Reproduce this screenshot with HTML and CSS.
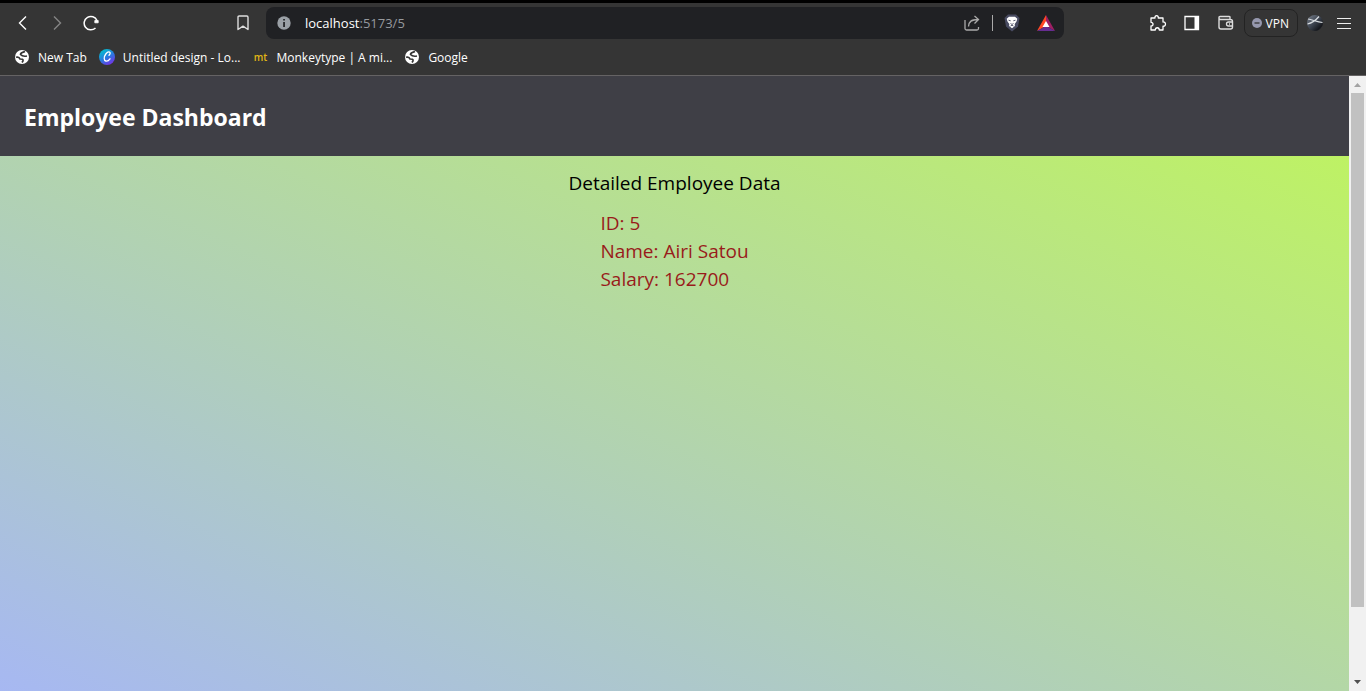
FILE: index.html
```html
<!DOCTYPE html>
<html lang="en">
<head>
<meta charset="utf-8">
<title>Employee Dashboard</title>
<link rel="stylesheet" href="styles.css">
</head>
<body>
<div class="browser">
  <div class="toolbar">
    <div class="nav-buttons">
      <button class="icon-button" aria-label="Back"><svg width="16" height="16" viewBox="0 0 16 16"><path d="M11 1.500 4.500 8l6.500 6.500" fill="none" stroke="#fff" stroke-width="1.400"/></svg></button>
      <button class="icon-button" aria-label="Forward"><svg width="16" height="16" viewBox="0 0 16 16"><path d="M5 1.500 11.500 8 5 14.500" fill="none" stroke="#858585" stroke-width="1.400"/></svg></button>
      <button class="icon-button" aria-label="Reload"><svg width="16" height="16" viewBox="0 0 16 16"><path d="M12.500 13A6.700 6.700 0 1 1 14 5.500" fill="none" stroke="#fff" stroke-width="1.500"/><path d="M11.800 5.500h3.400v2.300h-3.400z" fill="#fff" stroke="#fff" stroke-width=".8" stroke-linejoin="round"/></svg></button>
    </div>
    <button class="icon-button bookmark" aria-label="Bookmark this page"><svg width="16" height="16" viewBox="0 0 16 16"><path d="M3 2.200Q3 1 4.200 1h7.600Q13 1 13 2.200v12.300l-5-3.300-5 3.300z" fill="none" stroke="#ddd" stroke-width="1.400" stroke-linejoin="round"/></svg></button>
    <div class="address-bar">
      <svg width="14" height="14" viewBox="0 0 14 14"><circle cx="7" cy="7" r="6.700" fill="#9aa0a6"/><path d="M6.200 3h1.700v1.600H6.200zM6.200 6h1.700v5H6.200z" fill="#202124"/></svg>
      <div class="url"><span class="host">localhost</span>:5173/5</div>
      <div class="address-actions">
        <button class="icon-button share" aria-label="Share"><svg width="16" height="16" viewBox="0 0 16 16"><path d="M1 5v8.500Q1 15 2.500 15H13q1.500 0 1.500-1.500V12M4.500 11.500C4.500 6.800 7 4.500 14 4.500M10.500 1l4 3.500-4 4" fill="none" stroke="#aaa" stroke-width="1.300"/></svg></button>
        <span class="divider"></span>
        <button class="icon-button shields" aria-label="Shields"><svg width="16" height="18" viewBox="0 0 16 18"><path d="M4 .5h8L15.500 4 14 12.500 8 17.500l-6-5L.5 4z" fill="#484b61"/><path d="M5 2.700h6l2.300 2-.8 2.800-1.800 2.500.2 2L8 14.300 5.100 12l.2-2-1.800-2.500-.8-2.800z" fill="#fff"/><path d="m4.500 6.200 2.200.6M11.500 6.200l-2.200.6M6.500 9.500 8 10.500l1.500-1M6.500 12 8 11.300l1.500.7" fill="none" stroke="#484b61" stroke-width=".9"/></svg></button>
        <button class="icon-button rewards" aria-label="Rewards"><svg width="18" height="16" viewBox="0 0 18 16"><path d="M9 0 0 16l9-5z" fill="#ff4724"/><path d="m9 0 9 16-9-5z" fill="#9e1f63"/><path d="M0 16h18l-9-5z" fill="#662d91"/><path d="m9 6-3.500 6h7z" fill="#fff"/></svg></button>
      </div>
    </div>
    <div class="tools">
      <button class="icon-button" aria-label="Extensions"><svg width="18" height="18" viewBox="0 0 18 18"><path d="M2 4h4C5.500 1 9.700.8 9.300 4H14v4c3.300-.5 3.300 4.700 0 4.200V16h-3.700c0-3-4-3-4 0H2v-4c2.700 0 2.700-3.700 0-3.700z" fill="none" stroke="#fff" stroke-width="1.300" stroke-linejoin="round"/></svg></button>
      <button class="icon-button" aria-label="Sidebar"><svg width="16" height="16" viewBox="0 0 16 16"><path d="M1 1.500h13.500v13H1z" fill="none" stroke="#fff" stroke-width="1.300"/><path d="M10.500 1H15v14h-4.500z" fill="#fff"/></svg></button>
      <button class="icon-button" aria-label="Wallet"><svg width="18" height="16" viewBox="0 0 18 16"><path d="M13 4.500V2.200Q13 1.500 12 1.500H3Q2 1.500 2 2.500V12q0 2 2 2h9.500q2 0 2-2V6.500q0-2-2-2H3.500Q2 4.500 2 3" fill="none" stroke="#ddd" stroke-width="1.400"/><path d="M15.500 7h-4q-2 0-2 2t2 2h4M12 9h1" fill="none" stroke="#ddd" stroke-width="1.300"/></svg></button>
      <button class="vpn"><svg width="10" height="10" viewBox="0 0 10 10"><circle cx="5" cy="5" r="5" fill="#9698ae"/><path d="M2.500 5h5" stroke="#333" stroke-width="1.300"/></svg>VPN</button>
      <button class="icon-button profile" aria-label="Profile"><svg width="16" height="16" viewBox="0 0 16 16"><defs><linearGradient id="orb" x2="1" y2="1"><stop stop-color="#7a828e"/><stop offset=".5" stop-color="#3a414d"/><stop offset=".8" stop-color="#15171c"/><stop offset="1" stop-color="#5c6068"/></linearGradient></defs><circle cx="8" cy="8" r="8" fill="url(#orb)"/><path d="M.5 9C5 8 9 5 12 1.500M1 4c4 .5 9 3 14.500 3.500" fill="none" stroke="#d8dce0" stroke-width="1.200"/></svg></button>
      <button class="icon-button" aria-label="Menu"><svg width="14" height="12" viewBox="0 0 14 12"><path d="M0 1.500h14M0 6.500h14M0 11.500h14" stroke="#eee" stroke-width="1.200"/></svg></button>
    </div>
  </div>
  <nav class="bookmarks" aria-label="Bookmarks">
    <a class="bookmark-link" href="#"><svg width="16" height="16" viewBox="0 0 16 16"><circle cx="8" cy="8" r="7" fill="#fff"/><path d="M2 8.300c2.500-.8 3.500.2 4 1.700 2 0 3.500 0 3 2L8 13.500M11 2.500C9 3 6.500 3.500 6.500 5.500c1.500 1.700 3 2.200 6.500 1.500" fill="none" stroke="#353535" stroke-width="1.700"/></svg>New Tab</a>
    <a class="bookmark-link" href="#"><svg width="16" height="16" viewBox="0 0 16 16"><defs><linearGradient id="canva" x1=".2" y1="0" x2=".8" y2="1"><stop stop-color="#00c4cc"/><stop offset=".5" stop-color="#287bdf"/><stop offset="1" stop-color="#7d2ae8"/></linearGradient></defs><circle cx="8" cy="8" r="8" fill="url(#canva)"/><path d="M10 6.300C13 3 9.500 1.500 6.800 5c-2.200 3-2 6.500 0 7 1.500.4 3.200-.8 4.200-2.200" fill="none" stroke="#fff" stroke-width="1.300" stroke-linecap="round"/></svg>Untitled design - Lo...</a>
    <a class="bookmark-link" href="#"><span class="mt-icon">mt</span>Monkeytype | A mi...</a>
    <a class="bookmark-link" href="#"><svg width="16" height="16" viewBox="0 0 16 16"><circle cx="8" cy="8" r="7" fill="#fff"/><path d="M2 8.300c2.500-.8 3.500.2 4 1.700 2 0 3.500 0 3 2L8 13.500M11 2.500C9 3 6.500 3.500 6.500 5.500c1.500 1.700 3 2.200 6.500 1.500" fill="none" stroke="#353535" stroke-width="1.700"/></svg>Google</a>
  </nav>
  <div class="viewport">
    <div class="page">
      <header class="page-header"><h1>Employee Dashboard</h1></header>
      <main class="content">
        <h2>Detailed Employee Data</h2>
        <div class="details">
          <p>ID: 5</p>
          <p>Name: Airi Satou</p>
          <p>Salary: 162700</p>
        </div>
      </main>
    </div>
    <div class="scrollbar">
      <svg width="7" height="4" viewBox="0 0 7 4"><path d="M3.500 0 7 4H0z" fill="#a3a3a3"/></svg>
      <div class="track"><div class="thumb"></div></div>
      <svg width="7" height="4" viewBox="0 0 7 4"><path d="M0 0h7L3.500 4z" fill="#505050"/></svg>
    </div>
  </div>
</div>
</body>
</html>
```

FILE: styles.css
```css
* { box-sizing: border-box; }

body, h1, h2, p { margin: 0; }

body { font-family: "Segoe UI", "Open Sans", "Noto Sans", sans-serif; }

button {
  border: 0;
  padding: 0;
  background: none;
  color: inherit;
  font: inherit;
}

svg { display: block; flex-shrink: 0; }

.browser {
  display: flex;
  flex-direction: column;
  height: 100vh;
  overflow: hidden;
  border-top: 3px solid #000;
  background: #353535;
  color: #fff;
  font-size: 12px;
}

.toolbar {
  display: flex;
  align-items: center;
  height: 40px;
  padding: 0 13px 0 14px;
  flex-shrink: 0;
}

.icon-button {
  display: flex;
  align-items: center;
  justify-content: center;
  min-width: 18px;
  height: 18px;
}

.nav-buttons { display: flex; gap: 16px; }

.bookmark { margin: 0 14px 0 134px; }

.address-bar {
  display: flex;
  align-items: center;
  flex: 1;
  height: 32px;
  padding: 0 9px 0 11px;
  gap: 14px;
  border-radius: 8px;
  background: #202124;
}

.url { flex: 1; font-size: 13px; color: #96999e; }

.host { color: #fff; }

.address-actions { display: flex; align-items: center; }

.divider { width: 1px; height: 16px; margin: 0 10px 0 11px; background: #aaa; }

.rewards { margin-left: 16px; }

.tools {
  display: flex;
  align-items: center;
  gap: 16px;
  margin-left: 85px;
}

.vpn {
  display: flex;
  align-items: center;
  gap: 4px;
  height: 28px;
  padding: 0 8px 0 7px;
  margin: 0 -8px 0 -7px;
  border: 1px solid #232323;
  border-radius: 8px;
}

.profile { margin-right: -5px; }

.bookmarks {
  display: flex;
  align-items: center;
  gap: 12px;
  height: 33px;
  padding: 0 14px 4px;
  border-bottom: 1px solid #656364;
  flex-shrink: 0;
}

.bookmark-link {
  display: flex;
  align-items: center;
  gap: 8px;
  color: #fff;
  text-decoration: none;
}

.mt-icon {
  width: 16px;
  color: #e2b714;
  font-size: 10px;
  font-weight: 600;
  text-align: center;
}

.viewport { display: flex; flex: 1; min-height: 0; }

.page {
  display: flex;
  flex-direction: column;
  flex: 1;
  overflow: hidden;
}

.page-header {
  display: flex;
  align-items: center;
  height: 80px;
  padding: 2px 24px 0;
  background: #3f3f46;
  flex-shrink: 0;
}

h1 { font-size: 23px; line-height: 32px; font-weight: 700; }

.content {
  display: flex;
  flex-direction: column;
  align-items: center;
  height: 100%;
  padding-top: 13px;
  flex-shrink: 0;
  background: linear-gradient(to top right, #a5b4fc, #bef264);
}

h2 {
  margin-bottom: 12px;
  color: #000;
  font-size: 19px;
  line-height: 28px;
  font-weight: 400;
}

.details { color: #991b1b; font-size: 19px; line-height: 28px; }

.scrollbar {
  display: flex;
  flex-direction: column;
  align-items: center;
  gap: 6px;
  width: 17px;
  padding: 7px 0;
  background: #f1f1f1;
}

.track { flex: 1; width: 13px; }

.thumb { height: 88.5%; background: #c1c1c1; }
```
